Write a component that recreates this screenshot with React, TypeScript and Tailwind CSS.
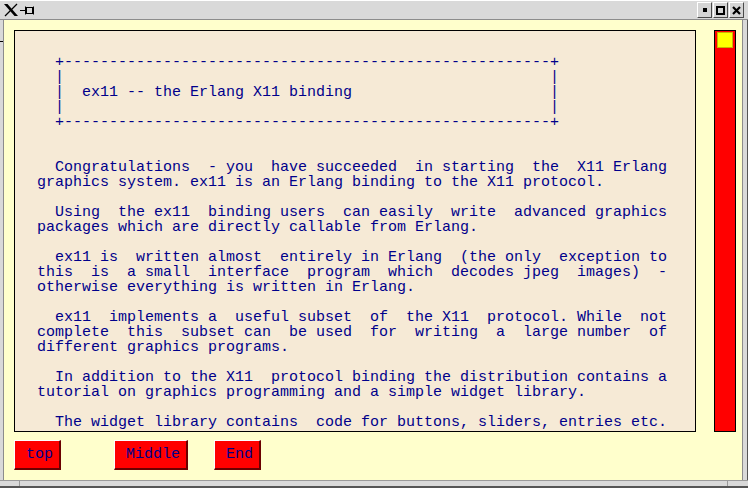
const boxTop = "  +" + "-".repeat(54) + "+";
const boxSide = "  |" + " ".repeat(54) + "|";
const boxTitle = "  |  ex11 -- the Erlang X11 binding".padEnd(57) + "|";

const lines = [
  boxTop,
  boxSide,
  boxTitle,
  boxSide,
  boxTop,
  "",
  "",
  "  Congratulations  - you  have succeeded  in starting  the  X11 Erlang",
  "graphics system. ex11 is an Erlang binding to the X11 protocol.",
  "",
  "  Using  the ex11  binding users  can easily  write  advanced graphics",
  "packages which are directly callable from Erlang.",
  "",
  "  ex11 is  written almost  entirely in Erlang  (the only  exception to",
  "this  is  a small  interface  program  which  decodes jpeg  images)  -",
  "otherwise everything is written in Erlang.",
  "",
  "  ex11  implements a  useful subset  of  the X11  protocol. While  not",
  "complete  this  subset can  be used  for  writing  a  large number  of",
  "different graphics programs.",
  "",
  "  In addition to the X11  protocol binding the distribution contains a",
  "tutorial on graphics programming and a simple widget library.",
  "",
  "  The widget library contains  code for buttons, sliders, entries etc.",
];

function TitleButton({ children }: { children: React.ReactNode }) {
  return (
    <div className="w-[15px] h-[16px] flex items-center justify-center bg-[#d4d4d4] border border-t-white border-l-white border-r-[#4a4a4a] border-b-[#4a4a4a]">
      {children}
    </div>
  );
}

function RedButton({ label, className }: { label: string; className?: string }) {
  return (
    <button
      className={
        "h-[30px] flex items-center pl-[11px] bg-[#ff0000] text-[#00008b] text-[15px] leading-none border-t border-l border-t-white border-l-white border-r-2 border-b-2 border-r-[#6a0000] border-b-[#6a0000] " +
        (className ?? "")
      }
    >
      {label}
    </button>
  );
}

export default function App() {
  return (
    <div className="w-[748px] h-[488px] flex flex-col bg-[#d9d9d9] overflow-hidden font-['Liberation_Mono',monospace]">
      {/* title bar */}
      <div className="h-[20px] shrink-0 flex items-center justify-between pl-[3px] pr-[4px] border-t border-t-white border-b border-b-[#8c8c8c]">
        <div className="flex items-center gap-[1px]">
          <svg width="16" height="14" viewBox="0 0 16 14">
            <polygon points="1,1 4.5,1 15,13 11.5,13" fill="#000" />
            <line x1="14" y1="1" x2="2" y2="13" stroke="#000" strokeWidth="1.3" />
          </svg>
          <svg width="16" height="10" viewBox="0 0 16 10" className="mt-[1px]">
            <line x1="0" y1="4.5" x2="5" y2="4.5" stroke="#000" strokeWidth="1" />
            <line x1="5.5" y1="0.5" x2="5.5" y2="8.5" stroke="#000" strokeWidth="1" />
            <rect x="6.5" y="1.5" width="6" height="6" fill="none" stroke="#000" strokeWidth="1" />
            <line x1="13.5" y1="0.5" x2="13.5" y2="8.5" stroke="#000" strokeWidth="1" />
          </svg>
        </div>
        <div className="flex gap-[1px]">
          <TitleButton>
            <div className="w-[4px] h-[4px] bg-black" />
          </TitleButton>
          <TitleButton>
            <div className="w-[9px] h-[9px] border-2 border-black" />
          </TitleButton>
          <TitleButton>
            <svg width="9" height="9" viewBox="0 0 9 9">
              <path d="M1 1 L8 8 M8 1 L1 8" stroke="#000" strokeWidth="2.2" />
            </svg>
          </TitleButton>
        </div>
      </div>

      {/* body */}
      <div className="flex-1 flex min-h-0">
        <div className="w-[4px] shrink-0 bg-[#d9d9d9] border-r border-r-[#8c8c8c]">
          <div className="mt-[21px] h-[1px] w-[3px] bg-black" />
        </div>

        <div className="flex-1 bg-[#ffffcc] pl-[10px] pt-[10px]">
          <div className="flex gap-[18px]">
            <div className="w-[682px] h-[402px] border border-black bg-[#f6ead6] overflow-hidden">
              <pre className="pl-[22px] pt-[24px] text-[15px] leading-[15px] text-[#00008b] whitespace-pre font-['Liberation_Mono',monospace]">
                {lines.join("\n")}
              </pre>
            </div>
            <div className="w-[22px] h-[402px] bg-[#ff0000] border border-black flex flex-col items-center">
              <div className="mt-[1px] w-[16px] h-[16px] bg-[#ffff00] border border-[#c8b400]" />
            </div>
          </div>

          <div className="mt-[8px] flex">
            <RedButton label="top" className="w-[47px]" />
            <RedButton label="Middle" className="w-[74px] ml-[53px]" />
            <RedButton label="End" className="w-[47px] ml-[26px]" />
          </div>
        </div>

        <div className="w-[6px] shrink-0 bg-[#d9d9d9] border-l border-l-[#8c8c8c] border-r border-r-[#555]" />
      </div>

      {/* bottom frame */}
      <div className="h-[8px] shrink-0 flex border-t border-t-[#9a9a9a] border-b-2 border-b-[#555]">
        <div className="w-[20px] border-r border-r-[#9a9a9a]" />
        <div className="flex-1 border-r border-r-[#9a9a9a]" />
        <div className="w-[20px]" />
      </div>
    </div>
  );
}
